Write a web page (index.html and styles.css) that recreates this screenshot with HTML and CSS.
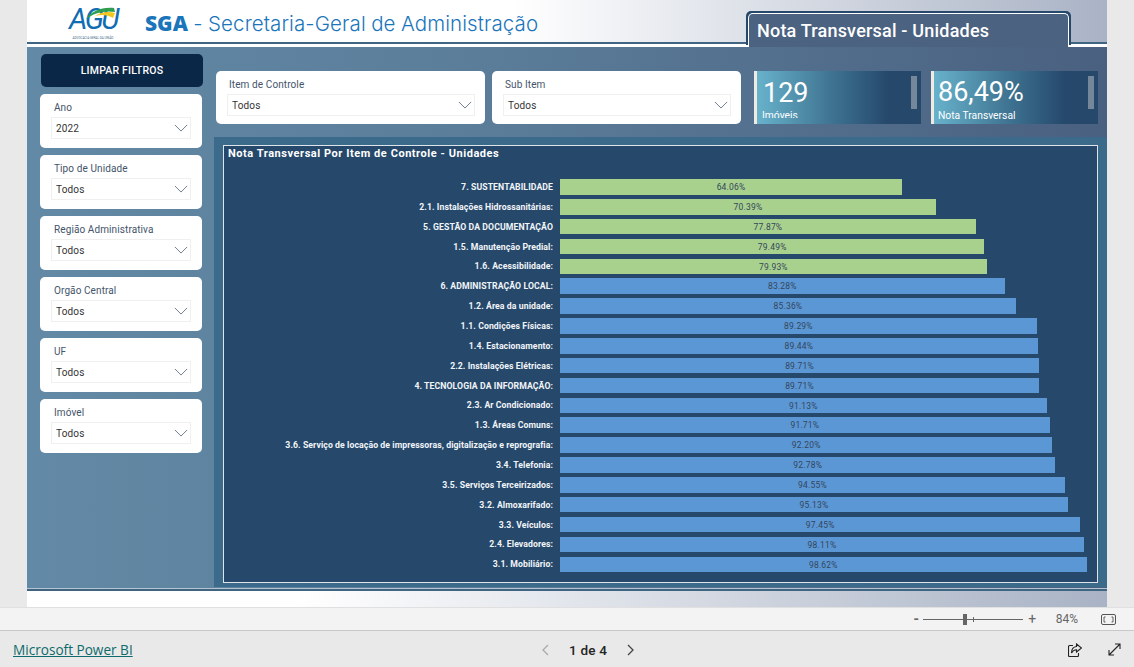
FILE: index.html
```html
<!DOCTYPE html>
<html lang="pt-BR">
<head>
  <meta charset="UTF-8" />
  <title>Nota Transversal - Unidades</title>
  <link rel="stylesheet" href="styles.css">
</head>
<body>

  <div class="viewer">
    <div class="report">

      <header class="topo">
        <div class="logo">
          <span class="logo-sigla">AGU</span>
          <svg class="logo-arco" width="31" height="13" viewBox="0 0 31 13">
            <path d="M1 12 C7 4 16 0 29 1 L30 5 C19 3 9 6 1 12 Z" fill="#2e9e4f"/>
            <path d="M10 9 C16 5 23 4 30 6 L28 11 C23 8 17 7 10 9 Z" fill="#f2c81e"/>
          </svg>
          <span class="logo-nome">ADVOCACIA-GERAL DA UNIÃO</span>
        </div>
        <h1 class="titulo"><b>SGA</b> - Secretaria-Geral de Administração</h1>
        <div class="aba">Nota Transversal - Unidades</div>
      </header>

      <div class="corpo">
        <aside class="filtros">
          <button class="btn-limpar">LIMPAR FILTROS</button>
          <div class="card"><label>Ano</label><div class="select"><span>2022</span><svg class="seta" viewBox="0 0 16 9"><path d="M1 1l7 7 7-7"/></svg></div></div>
          <div class="card"><label>Tipo de Unidade</label><div class="select"><span>Todos</span><svg class="seta" viewBox="0 0 16 9"><path d="M1 1l7 7 7-7"/></svg></div></div>
          <div class="card"><label>Região Administrativa</label><div class="select"><span>Todos</span><svg class="seta" viewBox="0 0 16 9"><path d="M1 1l7 7 7-7"/></svg></div></div>
          <div class="card"><label>Orgão Central</label><div class="select"><span>Todos</span><svg class="seta" viewBox="0 0 16 9"><path d="M1 1l7 7 7-7"/></svg></div></div>
          <div class="card"><label>UF</label><div class="select"><span>Todos</span><svg class="seta" viewBox="0 0 16 9"><path d="M1 1l7 7 7-7"/></svg></div></div>
          <div class="card"><label>Imóvel</label><div class="select"><span>Todos</span><svg class="seta" viewBox="0 0 16 9"><path d="M1 1l7 7 7-7"/></svg></div></div>
        </aside>

        <main class="conteudo">
          <div class="linha-topo">
            <div class="card card-item"><label>Item de Controle</label><div class="select"><span>Todos</span><svg class="seta" viewBox="0 0 16 9"><path d="M1 1l7 7 7-7"/></svg></div></div>
            <div class="card card-sub"><label>Sub Item</label><div class="select"><span>Todos</span><svg class="seta" viewBox="0 0 16 9"><path d="M1 1l7 7 7-7"/></svg></div></div>
            <div class="kpi kpi-imoveis"><div class="kpi-valor">129</div><div class="kpi-nome">Imóveis</div><i class="kpi-barra"></i></div>
            <div class="kpi kpi-nota"><div class="kpi-valor">86,49%</div><div class="kpi-nome">Nota Transversal</div><i class="kpi-barra"></i></div>
          </div>

          <section class="painel">
            <div class="grafico">
              <h2>Nota Transversal Por Item de Controle - Unidades</h2>
              <div class="linhas">
                <div class="linha"><span class="rotulo">7. SUSTENTABILIDADE</span><div class="trilho"><div class="barra verde" style="width:64.06%">64.06%</div></div></div>
                <div class="linha"><span class="rotulo">2.1. Instalações Hidrossanitárias:</span><div class="trilho"><div class="barra verde" style="width:70.39%">70.39%</div></div></div>
                <div class="linha"><span class="rotulo">5. GESTÃO DA DOCUMENTAÇÃO</span><div class="trilho"><div class="barra verde" style="width:77.87%">77.87%</div></div></div>
                <div class="linha"><span class="rotulo">1.5. Manutenção Predial:</span><div class="trilho"><div class="barra verde" style="width:79.49%">79.49%</div></div></div>
                <div class="linha"><span class="rotulo">1.6. Acessibilidade:</span><div class="trilho"><div class="barra verde" style="width:79.93%">79.93%</div></div></div>
                <div class="linha"><span class="rotulo">6. ADMINISTRAÇÃO LOCAL:</span><div class="trilho"><div class="barra" style="width:83.28%">83.28%</div></div></div>
                <div class="linha"><span class="rotulo">1.2. Área da unidade:</span><div class="trilho"><div class="barra" style="width:85.36%">85.36%</div></div></div>
                <div class="linha"><span class="rotulo">1.1. Condições Físicas:</span><div class="trilho"><div class="barra" style="width:89.29%">89.29%</div></div></div>
                <div class="linha"><span class="rotulo">1.4. Estacionamento:</span><div class="trilho"><div class="barra" style="width:89.44%">89.44%</div></div></div>
                <div class="linha"><span class="rotulo">2.2. Instalações Elétricas:</span><div class="trilho"><div class="barra" style="width:89.71%">89.71%</div></div></div>
                <div class="linha"><span class="rotulo">4. TECNOLOGIA DA INFORMAÇÃO:</span><div class="trilho"><div class="barra" style="width:89.71%">89.71%</div></div></div>
                <div class="linha"><span class="rotulo">2.3. Ar Condicionado:</span><div class="trilho"><div class="barra" style="width:91.13%">91.13%</div></div></div>
                <div class="linha"><span class="rotulo">1.3. Áreas Comuns:</span><div class="trilho"><div class="barra" style="width:91.71%">91.71%</div></div></div>
                <div class="linha"><span class="rotulo">3.6. Serviço de locação de impressoras, digitalização e reprografia:</span><div class="trilho"><div class="barra" style="width:92.20%">92.20%</div></div></div>
                <div class="linha"><span class="rotulo">3.4. Telefonia:</span><div class="trilho"><div class="barra" style="width:92.78%">92.78%</div></div></div>
                <div class="linha"><span class="rotulo">3.5. Serviços Terceirizados:</span><div class="trilho"><div class="barra" style="width:94.55%">94.55%</div></div></div>
                <div class="linha"><span class="rotulo">3.2. Almoxarifado:</span><div class="trilho"><div class="barra" style="width:95.13%">95.13%</div></div></div>
                <div class="linha"><span class="rotulo">3.3. Veículos:</span><div class="trilho"><div class="barra" style="width:97.45%">97.45%</div></div></div>
                <div class="linha"><span class="rotulo">2.4. Elevadores:</span><div class="trilho"><div class="barra" style="width:98.11%">98.11%</div></div></div>
                <div class="linha"><span class="rotulo">3.1. Mobiliário:</span><div class="trilho"><div class="barra" style="width:98.62%">98.62%</div></div></div>
              </div>
            </div>
          </section>
        </main>
      </div>

      <div class="rodape-relatorio"></div>
    </div>
  </div>

  <div class="barra-zoom">
    <span class="zoom-sinal zoom-menos">-</span>
    <div class="zoom-slider"><i class="zoom-marca"></i><i class="zoom-alca"></i></div>
    <span class="zoom-sinal zoom-mais">+</span>
    <span class="zoom-valor">84%</span>
    <svg class="zoom-ajuste" width="15" height="11" viewBox="0 0 15 11" fill="none" stroke="#555">
      <rect x="0.5" y="0.5" width="14" height="10" rx="1.5"/>
      <path d="M4.5 3H3v5h1.5M10.5 3H12v5h-1.5" stroke-width="0.9"/>
    </svg>
  </div>

  <footer class="barra-pbi">
    <a class="link-pbi" href="#">Microsoft Power BI</a>
    <nav class="paginas">
      <svg class="pag-seta" width="8" height="12" viewBox="0 0 8 12" fill="none" stroke="#aaa" stroke-width="1.3"><path d="M7 1L2 6l5 5"/></svg>
      <span>1 de 4</span>
      <svg class="pag-seta" width="8" height="12" viewBox="0 0 8 12" fill="none" stroke="#444" stroke-width="1.3"><path d="M1 1l5 5-5 5"/></svg>
    </nav>
    <div class="acoes">
      <svg width="14" height="14" viewBox="0 0 14 14" fill="none" stroke="#222" stroke-width="1.1">
        <path d="M5 2.5H1.500a1 1 0 0 0-1 1v9a1 1 0 0 0 1 1h8a1 1 0 0 0 1-1V10"/>
        <path d="M8.500 1l5 4-5 4V6.800C6 6.800 4.500 8 3.500 10c0-4 2-6.200 5-6.500z"/>
      </svg>
      <svg width="13" height="13" viewBox="0 0 13 13" fill="none" stroke="#222" stroke-width="1.1">
        <path d="M1 12L12 1M7 1h5v5M1 7v5h5"/>
      </svg>
    </div>
  </footer>

</body>
</html>
```

FILE: styles.css
```css
:root {
  --azul-escuro: #25486b;
  --azul-botao: #0b2747;
  --azul-barra: #5b97d5;
  --verde-barra: #a9d18e;
  --texto-card: #44546a;
}

* {
  margin: 0;
  padding: 0;
  box-sizing: border-box;
}

html, body {
  width: 1134px;
  height: 667px;
  overflow: hidden;
}

body {
  font-family: Roboto, "Liberation Sans", sans-serif;
  background: #e9e9e9;
  display: flex;
  flex-direction: column;
}

/* area do relatorio */
.viewer {
  height: 607px;
  padding: 0 27px;
}

.report {
  height: 100%;
  display: flex;
  flex-direction: column;
  background: linear-gradient(90deg, #fff 45%, #a9b3c5 100%);
}

/* topo */
.topo {
  height: 47px;
  flex: none;
  display: flex;
  align-items: flex-start;
  border-bottom: 3px solid #fff;
  box-shadow: inset 0 -2px 0 #3f6583;
  padding-left: 38px;
  position: relative;
}

.logo {
  width: 56px;
  height: 40px;
  margin-top: 5px;
  color: #0f6db3;
  display: flex;
  flex-direction: column;
  align-items: center;
  position: relative;
}

.logo-arco {
  position: absolute;
  top: 2px;
  left: 20px;
}

.logo-sigla {
  font-style: italic;
  font-size: 29px;
  line-height: 28px;
  letter-spacing: -2.500px;
}

.logo-nome {
  font-size: 3px;
  line-height: 5px;
  margin-top: 3px;
  white-space: nowrap;
  color: #44698c;
}

.titulo {
  margin: 11px 0 0 24px;
  font-family: Inter, sans-serif;
  font-size: 20.500px;
  font-weight: 300;
  line-height: 25px;
  letter-spacing: 0.1px;
  color: #1a75bb;
  white-space: nowrap;
  word-spacing: -0.5px;
}

.titulo b {
  font-family: "Open Sans", sans-serif;
  font-weight: 800;
  font-size: 21px;
  letter-spacing: 0;
}

.aba {
  position: absolute;
  left: 721px;
  top: 13px;
  width: 321px;
  height: 34px;
  padding: 6px 0 0 8px;
  background: #4b6280;
  border: 1px solid #fff;
  border-bottom: 0;
  border-radius: 5px 5px 0 0;
  box-shadow: -2px -2px 0 #25486b, 2px -2px 0 #25486b;
  font-size: 18px;
  font-weight: 500;
  letter-spacing: 0.2px;
  line-height: 21px;
  color: #fff;
  white-space: nowrap;
}

/* corpo */
.corpo {
  height: 542px;
  flex: none;
  display: flex;
  background: linear-gradient(90deg, #6289a5 0%, #5a7c99 45%, #4a6080 100%);
  border-bottom: 1px solid #b5c4d0;
}

.filtros {
  width: 187px;
  flex: none;
  padding: 7px 12px 0 13px;
  display: flex;
  flex-direction: column;
  gap: 7px;
}

.btn-limpar {
  width: 162px;
  height: 33px;
  flex: none;
  margin-left: 1px;
  background: var(--azul-botao);
  border: none;
  border-radius: 5px;
  color: #fff;
  font-family: inherit;
  font-size: 10.500px;
  font-weight: 500;
  letter-spacing: 0.2px;
}

.card {
  background: #fff;
  border-radius: 5px;
  height: 54px;
  padding: 7px 11px 0;
  color: var(--texto-card);
}

.card label {
  display: block;
  font-size: 10px;
  line-height: 13px;
  letter-spacing: 0.1px;
  padding-left: 3px;
  margin-bottom: 3px;
  white-space: nowrap;
}

.select {
  height: 22px;
  border: 1px solid #f0f0f0;
  display: flex;
  align-items: center;
  justify-content: space-between;
  padding: 0 2px 0 4px;
  font-size: 10px;
  letter-spacing: 0.15px;
  color: #333;
}

.seta {
  width: 14px;
  height: 8px;
  fill: none;
  stroke: #5b6b80;
  stroke-width: 1;
}

.conteudo {
  flex: 1;
  min-width: 0;
  display: flex;
  flex-direction: column;
}

.linha-topo {
  height: 90px;
  flex: none;
  padding: 24px 0 0 2px;
  display: flex;
  align-items: flex-start;
}

.linha-topo .card {
  height: 53px;
  padding: 7px 10px 0 11px;
}

.linha-topo .card label {
  padding-left: 2px;
}

.card-item {
  width: 269px;
  margin-right: 7px;
}

.card-sub {
  width: 249px;
  margin-right: 13px;
}

.kpi {
  width: 167px;
  height: 53px;
  overflow: hidden;
  position: relative;
  border-left: 3px solid #efeae2;
  background: linear-gradient(90deg, #68b2cb 0%, #3f7492 45%, #25486b 80%);
  color: #fff;
  padding-left: 6px;
}

.kpi-imoveis {
  margin-right: 10px;
}

.kpi-valor {
  font-size: 27px;
  line-height: 32px;
  margin-top: 6px;
}

.kpi-nota .kpi-valor {
  margin-left: -2px;
  margin-top: 5px;
}

.kpi-nome {
  font-size: 10.300px;
  line-height: 13px;
}

/* o rotulo de Imoveis aparece cortado no relatorio original */
.kpi-imoveis .kpi-nome {
  height: 9px;
  overflow: hidden;
  margin-left: -1px;
}

.kpi-nota .kpi-nome {
  margin: 1px 0 0 -2px;
}

.kpi-barra {
  position: absolute;
  top: 5px;
  right: 4px;
  width: 6px;
  height: 33px;
  background: #75879b;
}

.painel {
  width: 893px;
  height: 450px;
  background: #3b6a8b;
  padding: 8px 9px 4px;
}

.grafico {
  height: 100%;
  background: var(--azul-escuro);
  border: 1px solid #dde4ea;
  padding-right: 3px;
  color: #fff;
}

.grafico h2 {
  font-size: 11px;
  font-weight: 700;
  letter-spacing: 0.55px;
  line-height: 14px;
  padding: 1px 0 0 4px;
  height: 31px;
}

.linhas {
  display: flex;
  flex-direction: column;
}

.linha {
  height: 19.870px;
  display: grid;
  grid-template-columns: 329px 1fr;
  column-gap: 7px;
  align-items: center;
}

.rotulo {
  font-size: 8.700px;
  font-weight: 700;
  letter-spacing: 0.08px;
  text-align: right;
  white-space: nowrap;
  color: #f2f5f8;
}

.trilho {
  height: 15.500px;
}

.barra {
  height: 100%;
  background: var(--azul-barra);
  text-align: center;
  font-size: 8.500px;
  line-height: 16px;
  letter-spacing: 0.2px;
  color: #34465c;
}

.barra.verde {
  background: var(--verde-barra);
}

.rodape-relatorio {
  flex: 1;
  border-top: 2px solid #3f6583;
  background: linear-gradient(90deg, #fff 25%, #a9b3c5 100%);
}

/* barra de zoom */
.barra-zoom {
  height: 24px;
  flex: none;
  background: #f3f3f3;
  border-top: 1px solid #e0e0e0;
  border-bottom: 1px solid #c8c8c8;
  display: flex;
  align-items: center;
  justify-content: flex-end;
  padding-right: 18px;
  color: #666;
  font-size: 12px;
}

.zoom-sinal {
  font-size: 14px;
  width: 9px;
  text-align: center;
}

.zoom-menos {
  font-weight: 700;
  margin-left: 2px;
}

.zoom-slider {
  width: 100px;
  height: 1px;
  margin: 0 5px 0 2px;
  background: #666;
  position: relative;
}

.zoom-marca {
  position: absolute;
  left: 50px;
  top: -2px;
  width: 1px;
  height: 5px;
  background: #666;
}

.zoom-alca {
  position: absolute;
  left: 40px;
  top: -5px;
  width: 4px;
  height: 11px;
  background: #666;
}

.zoom-valor {
  margin: 0 23px 0 19px;
}

.zoom-ajuste {
  display: block;
}

/* rodape power bi */
.barra-pbi {
  flex: 1;
  position: relative;
  display: flex;
  align-items: center;
  padding: 1px 13px 0;
  background: #e9e9e9;
}

.link-pbi {
  font-family: "Open Sans", sans-serif;
  font-size: 13.600px;
  color: #0e6b6b;
}

.paginas {
  position: absolute;
  left: 541px;
  top: 1px;
  height: 100%;
  display: flex;
  align-items: center;
  gap: 20px;
  font-size: 13.500px;
  font-weight: 500;
  letter-spacing: 0.2px;
  color: #252423;
}

.acoes {
  margin-left: auto;
  display: flex;
  align-items: center;
  gap: 26px;
}
```
